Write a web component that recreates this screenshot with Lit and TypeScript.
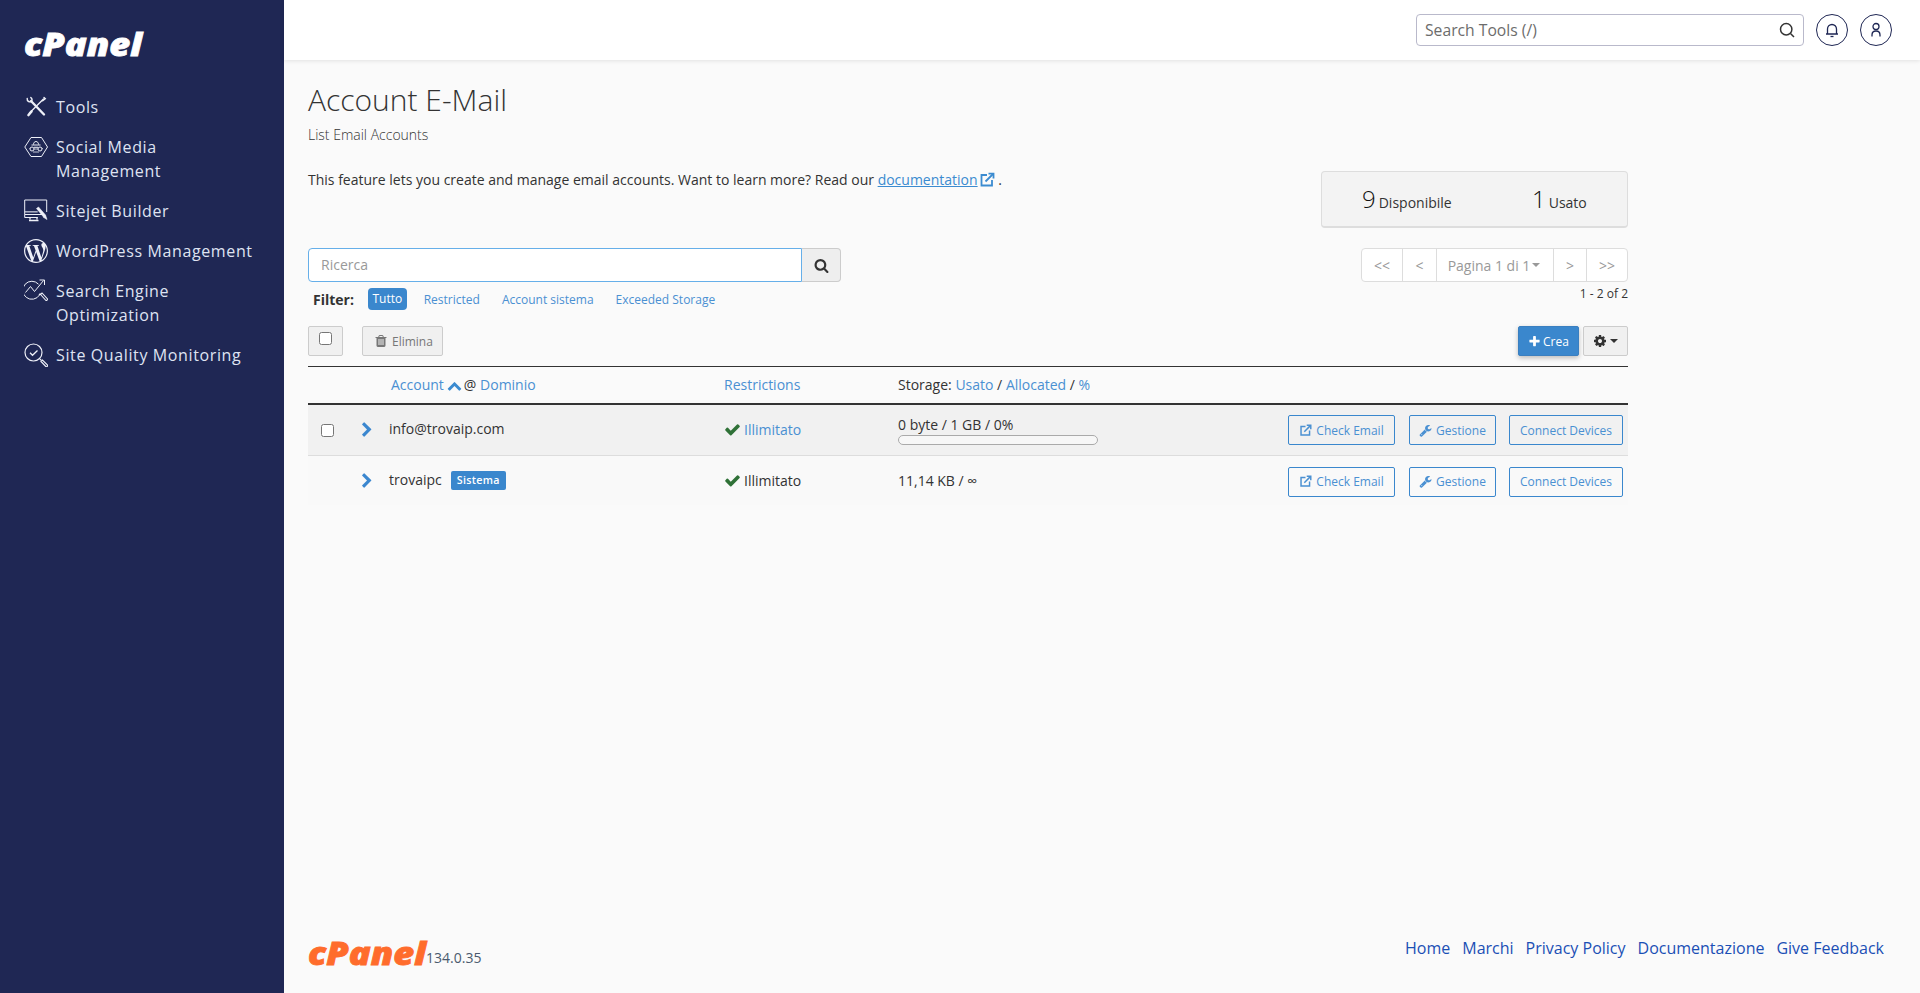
import { LitElement, html, css, svg } from "lit";
import { customElement } from "lit/decorators.js";

const P = {
  check: "M1671 566q0 40-28 68l-724 724-136 136q-28 28-68 28t-68-28l-136-136-362-362q-28-28-28-68t28-68l136-136q28-28 68-28t68 28l294 295 656-657q28-28 68-28t68 28l136 136q28 28 28 68z",
  search: "M1216 832q0-185-131.500-316.500t-316.500-131.500-316.500 131.500-131.500 316.500 131.500 316.500 316.500 131.500 316.500-131.500 131.500-316.500zm512 832q0 52-38 90t-90 38q-54 0-90-38l-343-342q-179 124-399 124-143 0-273.500-55.500t-225-150-150-225-55.500-273.500 55.500-273.500 150-225 225-150 273.500-55.500 273.500 55.500 225 150 150 225 55.500 273.500q0 220-124 399l343 343q37 37 37 90z",
  wrench: "M448 1472q0-26-19-45t-45-19-45 19-19 45 19 45 45 19 45-19 19-45zm644-420l-682 682q-37 37-90 37-52 0-91-37l-106-108q-38-36-38-90 0-53 38-91l681-681q39 98 114.500 173.500t173.500 114.500zm634-435q0 39-23 106-47 134-164.500 217.500t-258.500 83.500q-185 0-316.500-131.500t-131.500-316.500 131.500-316.500 316.500-131.500q58 0 121.500 16.500t107.500 46.500q16 11 16 28t-16 28l-293 169v224l193 107q5-3 79-48.500t135.500-81 70.500-35.500q15 0 23.500 10t8.500 25z",
  cog: "M1152 896q0-106-75-181t-181-75-181 75-75 181 75 181 181 75 181-75 75-181zm512-109v222q0 12-8 23t-20 13l-185 28q-19 54-39 91 35 50 107 138 10 12 10 25t-9 23q-27 37-99 108t-94 71q-12 0-26-9l-138-108q-44 23-91 38-16 136-29 186-7 28-36 28h-222q-14 0-24.500-8.500t-11.500-21.500l-28-184q-49-16-90-37l-141 107q-10 9-25 9-14 0-25-11-126-114-165-168-7-10-7-23 0-12 8-23 15-21 51-66.500t54-70.500q-27-50-41-99l-183-27q-13-2-21-12.500t-8-23.500v-222q0-12 8-23t19-13l186-28q14-46 39-92-40-57-107-138-10-12-10-24 0-10 9-23 26-36 98.500-107.500t94.500-71.500q13 0 26 10l138 107q44-23 91-38 16-136 29-186 7-28 36-28h222q14 0 24.500 8.500t11.500 21.500l28 184q49 16 90 37l142-107q9-9 24-9 13 0 25 10 129 119 165 170 7 8 7 22 0 12-8 23-15 21-51 66.500t-54 70.500q26 50 41 98l183 28q13 2 21 12.500t8 23.500z",
  trash: "M704 1376v-704q0-14-9-23t-23-9h-64q-14 0-23 9t-9 23v704q0 14 9 23t23 9h64q14 0 23-9t9-23zm256 0v-704q0-14-9-23t-23-9h-64q-14 0-23 9t-9 23v704q0 14 9 23t23 9h64q14 0 23-9t9-23zm256 0v-704q0-14-9-23t-23-9h-64q-14 0-23 9t-9 23v704q0 14 9 23t23 9h64q14 0 23-9t9-23zm-544-992h448l-48-117q-7-9-17-11h-317q-10 2-17 11zm928 32v64q0 14-9 23t-23 9h-96v948q0 83-47 143.500t-113 60.500h-832q-66 0-113-58.500t-47-141.500v-952h-96q-14 0-23-9t-9-23v-64q0-14 9-23t23-9h309l70-167q15-37 54-63t79-26h320q40 0 79 26t54 63l70 167h309q14 0 23 9t9 23z",
  plus: "M1600 736v192q0 40-28 68t-68 28h-416v416q0 40-28 68t-68 28h-192q-40 0-68-28t-28-68v-416h-416q-40 0-68-28t-28-68v-192q0-40 28-68t68-28h416v-416q0-40 28-68t68-28h192q40 0 68 28t28 68v416h416q40 0 68 28t28 68z",
  up: "M1683 1331l-166 165q-19 19-45 19t-45-19l-531-531-531 531q-19 19-45 19t-45-19l-166-165q-19-19-19-45.500t19-45.500l742-741q19-19 45-19t45 19l742 741q19 19 19 45.500t-19 45.500z",
  right: "M1363 877l-742 742q-19 19-45 19t-45-19l-166-166q-19-19-19-45t19-45l531-531-531-531q-19-19-19-45t19-45l166-166q19-19 45-19t45 19l742 742q19 19 19 45t-19 45z",
};
const fa = (d: string, cls: string) => html`<svg class=${cls} viewBox="0 0 1792 1792" aria-hidden="true"><path fill="currentColor" d=${d}></path></svg>`;
const ext = (cls: string) => html`<svg class=${cls} viewBox="0 0 16 16" aria-hidden="true" fill="none" stroke="currentColor" stroke-width="1.800"><path d="M8 3H2.500v10.500H13V8"></path><path d="M6.500 9.500 14 2"></path><path d="M9.500 1.600h5v5"></path></svg>`;

const icons: Record<string, unknown> = {
  tools: svg`<g fill="none" stroke="currentColor" stroke-width="1.400" stroke-linecap="round">
    <path d="M7 6 20 19.500" stroke-width="2.400"></path><path d="M3.200 3.500c-.3 2.500 2 4 4.300 3 .8-1.400.6-3-.7-4"></path>
    <path d="M19.500 4 5.500 18"></path><path d="M7.500 16.500 4.500 20" stroke-width="2.600"></path><path d="M20 2.500l1.300 1.300-2.600 2"></path></g>`,
  social: svg`<g fill="none" stroke="currentColor" stroke-width="1">
    <path d="M7 2.500h10.500L23.500 12l-6 9.500H7L.8 12z"></path>
    <path d="M9.500 9.500c0-4 5-4 5 0"></path><path d="M7.500 10h9M10 12.300h4"></path>
    <circle cx="8" cy="14" r="2"></circle><circle cx="16" cy="14" r="2"></circle><path d="M5.500 13.500h.5M18 13.500h.8M10 14h4M9 17h6" stroke-width=".8"></path></g>`,
  sitejet: svg`<g fill="none" stroke="currentColor" stroke-width="1">
    <path d="M18 15.500H.7V1h22v12"></path><path d="M.7 12.800h13" stroke-width="1.500" opacity=".7"></path><path d="M6 18.500v2M13 18v2.500M5 21.500h9.500" stroke-width="1.300"></path><path d="M.7 15.500v3h13"></path>
    <path d="M12.500 9.500l2-1.500 7 8-2 2zM21.500 16l1.500 4.500-4-2.500" fill="currentColor" stroke-width=".6"></path></g>`,
  wp: svg`<path fill="currentColor" d="M21.469 6.825c.84 1.537 1.318 3.3 1.318 5.175 0 3.979-2.156 7.456-5.363 9.325l3.295-9.527c.615-1.54.82-2.771.82-3.864 0-.405-.026-.78-.07-1.11m-7.981.105c.647-.03 1.232-.105 1.232-.105.582-.075.514-.93-.067-.899 0 0-1.755.135-2.88.135-1.064 0-2.85-.15-2.85-.15-.585-.03-.661.855-.075.885 0 0 .54.061 1.125.09l1.68 4.605-2.37 7.08L5.354 6.9c.649-.03 1.234-.1 1.234-.1.585-.075.516-.93-.065-.896 0 0-1.746.138-2.874.138-.2 0-.438-.008-.69-.015C4.911 3.150 8.235 1.215 12 1.215c2.809 0 5.365 1.072 7.286 2.833-.046-.003-.091-.009-.141-.009-1.060 0-1.812.923-1.812 1.914 0 .89.513 1.643 1.060 2.531.411.72.89 1.643.89 2.977 0 .915-.354 1.994-.821 3.479l-1.075 3.585-3.9-11.610.001.014zM12 22.784c-1.059 0-2.081-.153-3.048-.437l3.237-9.406 3.315 9.087c.024.053.05.101.078.149-1.120.393-2.325.609-3.582.609M1.211 12c0-1.564.336-3.050.935-4.390L7.290 21.709C3.694 19.960 1.212 16.271 1.212 12M12 0C5.385 0 0 5.385 0 12s5.385 12 12 12 12-5.385 12-12S18.615 0 12 0"></path>`,
  seo: svg`<g fill="none" stroke="currentColor" stroke-width="1">
    <path d="M14.500 5.200A9 9 0 1 0 15.500 16"></path><path d="M1.500 13.500 6.500 7.500l4 5 9-11M15.500 1h5v5"></path>
    <path d="M15 16l1.500-1.500M16.500 15.500l5.500 6a1.400 1.400 0 0 0 1.500-1.500l-5.500-6z" stroke-width="1.100"></path></g>`,
  qual: svg`<g fill="none" stroke="currentColor" stroke-width="1.200">
    <circle cx="9.500" cy="9.500" r="8.500"></circle><path d="M6 9.800l2.500 2.500L13.500 7.500" stroke-width="1.300"></path>
    <path d="M15.800 15.800l1.500 1.500"></path><path d="M17 18.500l1.500-1.500 5 5a1.300 1.300 0 0 1-1.500 1.700z"></path></g>`,
};

const nav = [
  ["tools", ["Tools"]],
  ["social", ["Social Media", "Management"]],
  ["sitejet", ["Sitejet Builder"]],
  ["wp", ["WordPress Management"]],
  ["seo", ["Search Engine", "Optimization"]],
  ["qual", ["Site Quality Monitoring"]],
] as [string, string[]][];

const logo = (cls: string) => html`<svg class="logo ${cls}" viewBox="0 0 118 26" role="img" aria-label="cPanel"><text x="0" y="24" textLength="118" lengthAdjust="spacingAndGlyphs">cPanel</text></svg>`;

@customElement("app-root")
export class AppRoot extends LitElement {
  static styles = css`
    :host { display: block; font-family: "Open Sans", "Liberation Sans", sans-serif; color: #333; font-size: 14px; }
    * { box-sizing: border-box; }
    a { color: #4a90d2; text-decoration: none; }
    .page { display: grid; grid-template-columns: 284px 1fr; min-height: 100vh; background: #fafafa; }
    .side { background: #1f2754; color: #dfe3f2; padding: 32px 0 0 24px; display: flex; flex-direction: column; }
    .logo { display: block; width: 118px; height: 26px; overflow: visible; }
    .logo text { font-family: "Open Sans", sans-serif; font-weight: 800; font-style: italic; font-size: 31px; stroke-width: .8px; }
    .logo.w text { fill: #fff; stroke: #fff; }
    .logo.o text { fill: #ff6c2c; stroke: #ff6c2c; }
    .nav { margin-top: 37px; display: flex; flex-direction: column; gap: 16px; }
    .item { display: flex; gap: 8px; font-size: 16px; line-height: 24px; letter-spacing: .62px; }
    .item svg { width: 24px; height: 24px; flex: none; color: #eef0f8; }
    .main { display: flex; flex-direction: column; min-width: 0; }
    .top { height: 60px; background: #fff; box-shadow: 0 1px 4px rgba(0,0,0,.1); display: flex; justify-content: flex-end; align-items: center; padding-right: 28px; gap: 12px; position: relative; }
    .tsearch { width: 388px; height: 32px; border: 1px solid #b9b9cb; border-radius: 4px; display: flex; align-items: center; padding: 0 8px 0 7px; background: #fff; }
    .tsearch input { flex: 1; border: 0; outline: 0; padding: 0 1px; font: 15.700px "Open Sans", sans-serif; color: #555; min-width: 0; background: none; }
    .tsearch input::placeholder { color: #6c6c6c; opacity: 1; }
    .tsearch svg { width: 16px; height: 16px; color: #333; }
    .round { width: 32px; height: 32px; border: 1px solid #1f2754; border-radius: 50%; display: grid; place-items: center; color: #1f2754; }
    .round svg { width: 16px; height: 16px; }
    .content { flex: 1; padding: 20px 0 0 24px; }
    .wrap { width: 1320px; }
    h1 { margin: 0; font-size: 30px; line-height: 40px; font-weight: 300; color: #333; }
    .sub { margin-top: 5px; line-height: 20px; font-size: 14px; font-weight: 300; color: #333; }
    .intro { display: flex; justify-content: space-between; align-items: flex-start; margin-top: 25px; line-height: 20px; }
    .intro a { color: #3b8bd0; text-decoration: underline; }
    .extl { width: 16px; height: 16px; color: #3b8bd0; vertical-align: -3px; margin-left: 1px; }
    .stats { margin-top: 1px; width: 307px; height: 57px; background: #f3f3f3; border: 1px solid #ddd; border-bottom-width: 2px; border-radius: 4px; display: grid; grid-template-columns: 170px 1fr; padding-left: 40px; align-items: center; color: #333; }
    .stats b { font-size: 24px; font-weight: 300; margin-right: 3px; line-height: 30px; color: #111; }
    .bar { display: flex; justify-content: space-between; margin-top: 20px; }
    .group { display: flex; width: 533px; height: 34px; }
    .group input { width: 494px; height: 34px; border: 1px solid #66afe9; border-radius: 4px 0 0 4px; background: #fff; padding: 0 12px 2px; font: 14px "Open Sans", sans-serif; outline: 0; }
    .group input::placeholder { color: #999; opacity: 1; }
    .group button { flex: 1; border: 1px solid #ccc; border-left: 0; border-radius: 0 4px 4px 0; background: #eee; display: grid; place-items: center; padding: 0; color: #333; }
    .group svg { width: 15px; height: 15px; }
    .filter { display: flex; align-items: center; margin-top: 6px; height: 22px; font-size: 12px; padding-left: 5px; }
    .filter strong { font-size: 14px; font-weight: 700; margin-right: 14px; }
    .pill { background: #3a87cd; color: #fff; border-radius: 4px; height: 22px; line-height: 22px; padding: 0 4.500px; margin-right: 17px; }
    .filter a + a { margin-right: 22px; }
    .pager { display: flex; height: 34px; width: 267px; background: #fff; border: 1px solid #ddd; border-radius: 4px; color: #999; font-size: 14px; }
    .pager span { display: flex; align-items: center; justify-content: center; border-left: 1px solid #ddd; gap: 2px; }
    .pager span:first-child { border-left: 0; }
    .p1 { width: 40px; } .p2 { width: 34px; } .p3 { width: 117px; padding-right: 2px; } .p4 { width: 33px; } .p5 { flex: 1; }
    .caret { display: inline-block; border: 4px solid transparent; border-top-color: currentColor; border-bottom-width: 0; }
    .count { margin-top: 4px; line-height: 16px; font-size: 12px; text-align: right; }
    .actions { display: flex; justify-content: space-between; margin-top: 16px; height: 30px; }
    .l, .r { display: flex; gap: 19px; }
    .r { gap: 4px; }
    .gbtn { height: 30px; border: 1px solid #ccc; border-radius: 2px; background: #f0f0f0; display: flex; align-items: center; font-size: 12px; color: #777; }
    .cbw { width: 35px; padding-left: 10px; align-items: flex-start; padding-top: 5px; }
    input[type=checkbox] { width: 13px; height: 13px; margin: 0; display: block; }
    .del { width: 81px; padding-left: 11px; gap: 4px; }
    .del svg { width: 14px; height: 14px; }
    .crea { width: 61px; height: 30px; background: #3a87cd; border: 1px solid #3a7fc0; border-radius: 2px; color: #fff; font-size: 12px; display: flex; align-items: center; justify-content: center; gap: 2px; box-shadow: 0 2px 5px rgba(0,0,0,.25); }
    .crea svg { width: 13px; height: 13px; }
    .gear { width: 45px; justify-content: center; gap: 3px; color: #333; }
    .gear svg { width: 14px; height: 14px; }
    .table { margin-top: 10px; border-top: 1px solid #333; }
    .row { display: grid; grid-template-columns: 52px 29px 335px 174px 240px 1fr; align-items: center; }
    .head { height: 38px; border-bottom: 2px solid #333; padding-bottom: 2px; }
    .head .acc { padding-left: 2px; }
    .up { width: 15px; height: 15px; color: #3b8bd0; vertical-align: -3px; margin: 0 2px 0 3px; }
    .r1 { height: 51px; background: #f1f1f1; border-bottom: 1px solid #ddd; }
    .r2 { height: 49px; background: #f9f9f9; }
    .cc { padding-left: 13px; }
    .chev { width: 16px; height: 16px; color: #3b87cf; display: block; margin-left: -1px; }
    .name { position: relative; display: flex; align-items: center; }
    .r1 .name { top: -2px; }
    .r2 .name { top: -1px; }
    .badge { background: #3a87cd; color: #fff; border-radius: 2px; font-size: 10.700px; font-weight: 600; line-height: 19px; padding: 0 6px; margin: 2px 0 0 9px; letter-spacing: .3px; }
    .res { display: flex; align-items: center; gap: 3px; }
    .r1 .res { position: relative; top: -1px; }
    .res svg { width: 17px; height: 17px; color: #2f7137; margin-left: 0; }
    .store { line-height: 20px; }
    .prog { width: 200px; height: 10px; border: 1px solid #aaa; border-radius: 5px; background: #f7f7f7; margin-top: 0; }
    .btns { display: flex; justify-content: flex-end; gap: 14px; padding-right: 5px; }
    .r2 .btns { margin-top: 2px; }
    .ob { height: 30px; border: 1px solid #3a87cd; border-radius: 2px; color: #4a90d2; font-size: 12px; display: flex; align-items: center; justify-content: center; gap: 4px; flex: none; white-space: nowrap; }
    .ob svg { width: 13px; height: 13px; }
    .b1 { width: 107px; } .b2 { width: 87px; margin-right: -1px; } .b3 { width: 114px; }
    .foot { height: 63px; display: flex; justify-content: space-between; padding: 11px 36px 0 24px; }
    .fl { display: flex; align-items: flex-start; }
    .ver { margin: 7px 0 0 0; font-size: 14px; line-height: 20px; color: #4b5a6e; }
    .links { display: flex; gap: 12px; margin-top: -5px; font-size: 16px; line-height: 24px; }
    .links a { color: #1a4fb5; }
  `;

  private actionsCell() {
    return html`<div class="btns">
      <a class="ob b1">${ext("")}Check Email</a>
      <a class="ob b2">${fa(P.wrench, "")}Gestione</a>
      <a class="ob b3">Connect Devices</a>
    </div>`;
  }

  render() {
    return html`<div class="page">
      <aside class="side">
        ${logo("w")}
        <nav class="nav">
          ${nav.map(([ic, lines]) => html`<div class="item">
            <svg viewBox="0 0 24 24" aria-hidden="true">${icons[ic]}</svg>
            <span>${lines.map((l, i) => html`${i ? html`<br />` : ""}${l}`)}</span>
          </div>`)}
        </nav>
      </aside>
      <div class="main">
        <header class="top">
          <div class="tsearch"><input placeholder="Search Tools (/)" />
            <svg viewBox="0 0 16 16" fill="none" stroke="currentColor" stroke-width="1.500"><circle cx="7.200" cy="7.200" r="5.700"></circle><path d="M11.500 11.500 15 15"></path></svg></div>
          <div class="round"><svg viewBox="0 0 16 16" fill="none" stroke="currentColor" stroke-width="1.300"><path d="M3.500 12V7a4.500 4.500 0 0 1 9 0v5M2 12h12"></path><path d="M6.500 14.500h3"></path></svg></div>
          <div class="round"><svg viewBox="0 0 16 16" fill="none" stroke="currentColor" stroke-width="1.300"><circle cx="8" cy="4.500" r="3"></circle><path d="M4 14.500V13c0-2.500 1.500-4 4-4s4 1.500 4 4v1.500"></path></svg></div>
        </header>
        <main class="content"><div class="wrap">
          <h1>Account E-Mail</h1>
          <div class="sub">List Email Accounts</div>
          <div class="intro">
            <div>This feature lets you create and manage email accounts. Want to learn more? Read our <a>documentation</a>${ext("extl")} .</div>
            <div class="stats"><div><b>9</b>Disponibile</div><div><b>1</b>Usato</div></div>
          </div>
          <div class="bar">
            <div>
              <div class="group"><input placeholder="Ricerca" /><button>${fa(P.search, "")}</button></div>
              <div class="filter"><strong>Filter:</strong><a class="pill">Tutto</a><a>Restricted</a><a>Account sistema</a><a>Exceeded Storage</a></div>
            </div>
            <div>
              <div class="pager"><span class="p1">&lt;&lt;</span><span class="p2">&lt;</span><span class="p3">Pagina 1 di 1<i class="caret"></i></span><span class="p4">&gt;</span><span class="p5">&gt;&gt;</span></div>
              <div class="count">1 - 2 of 2</div>
            </div>
          </div>
          <div class="actions">
            <div class="l">
              <div class="gbtn cbw"><input type="checkbox" /></div>
              <div class="gbtn del">${fa(P.trash, "")}Elimina</div>
            </div>
            <div class="r">
              <div class="crea">${fa(P.plus, "")}Crea</div>
              <div class="gbtn gear">${fa(P.cog, "")}<i class="caret"></i></div>
            </div>
          </div>
          <div class="table">
            <div class="row head">
              <div></div><div></div>
              <div class="acc"><a>Account</a>${fa(P.up, "up")}@ <a>Dominio</a></div>
              <div><a>Restrictions</a></div>
              <div>Storage: <a>Usato</a> / <a>Allocated</a> / <a>%</a></div>
              <div></div>
            </div>
            <div class="row r1">
              <div class="cc"><input type="checkbox" /></div>
              <div>${fa(P.right, "chev")}</div>
              <div class="name">info@trovaip.com</div>
              <div class="res">${fa(P.check, "")}<a>Illimitato</a></div>
              <div class="store">0 byte / 1 GB / 0%<div class="prog"></div></div>
              ${this.actionsCell()}
            </div>
            <div class="row r2">
              <div></div>
              <div>${fa(P.right, "chev")}</div>
              <div class="name">trovaipc<span class="badge">Sistema</span></div>
              <div class="res">${fa(P.check, "")}<span>Illimitato</span></div>
              <div class="store">11,14 KB / ∞</div>
              ${this.actionsCell()}
            </div>
          </div>
        </div></main>
        <footer class="foot">
          <div class="fl">${logo("o")}<span class="ver">134.0.35</span></div>
          <div class="links"><a>Home</a><a>Marchi</a><a>Privacy Policy</a><a>Documentazione</a><a>Give Feedback</a></div>
        </footer>
      </div>
    </div>`;
  }
}
